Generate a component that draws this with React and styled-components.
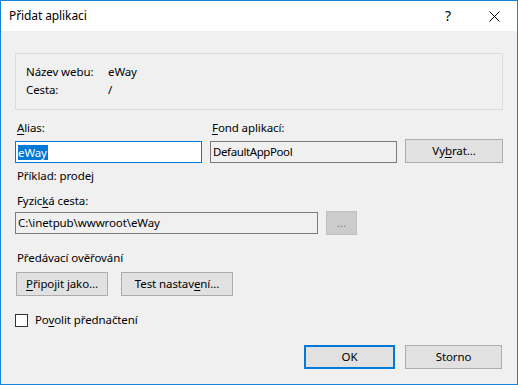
import styled, { createGlobalStyle } from "styled-components";

const GlobalStyle = createGlobalStyle`
  html, body {
    margin: 0;
    padding: 0;
    background: #ffffff;
  }
  * {
    box-sizing: border-box;
  }
`;

function App() {
  return (
    <>
      <GlobalStyle />
      <Window>
        <TitleBar>
          <Title>Přidat aplikaci</Title>
          <CaptionButton>
            <HelpGlyph>?</HelpGlyph>
          </CaptionButton>
          <CaptionButton>
            <svg width="11" height="11" viewBox="0 0 11 11">
              <path d="M0.5 0.5 L10.5 10.5 M10.5 0.5 L0.5 10.5" stroke="#000" strokeWidth="1" fill="none" />
            </svg>
          </CaptionButton>
        </TitleBar>
        <Body>
          <InfoBox>
            <InfoRow>
              <InfoLabel>Název webu:</InfoLabel>
              <span>eWay</span>
            </InfoRow>
            <InfoRow>
              <InfoLabel>Cesta:</InfoLabel>
              <span>/</span>
            </InfoRow>
          </InfoBox>

          <FieldGrid>
            <Label>
              <Key>A</Key>lias:
            </Label>
            <Label>
              <Key>F</Key>ond aplikací:
            </Label>
            <span />
            <TextBox $focused>
              <Selected>eWay</Selected>
            </TextBox>
            <TextBox $readOnly $tight>
              DefaultAppPool
            </TextBox>
            <Button $width={98}>
              Vy<Key>b</Key>rat...
            </Button>
          </FieldGrid>

          <Hint>Příklad: prodej</Hint>

          <Label $top={9}>
            Fyzic<Key>k</Key>á cesta:
          </Label>
          <PathRow>
            <TextBox $readOnly $width={303}>
              C:\inetpub\wwwroot\eWay
            </TextBox>
            <Button $width={31} $disabled>
              ...
            </Button>
          </PathRow>

          <Label $top={15}>Předávací ověřování</Label>
          <ButtonRow>
            <Button $width={92}>
              <Key>P</Key>řipojit jako...
            </Button>
            <Button $width={112}>
              Test nastav<Key>e</Key>ní...
            </Button>
          </ButtonRow>

          <CheckRow>
            <CheckBox />
            <span>
              Po<Key>v</Key>olit přednačtení
            </span>
          </CheckRow>

          <Footer>
            <Button $width={91} $default>
              OK
            </Button>
            <Button $width={97}>Storno</Button>
          </Footer>
        </Body>
      </Window>
    </>
  );
}

export default App;

const Window = styled.div`
  width: 518px;
  height: 385px;
  border: 1px solid #1883d7;
  display: flex;
  flex-direction: column;
  font-family: "Segoe UI", "Noto Sans", sans-serif;
  font-size: 11.5px;
  letter-spacing: -0.1px;
  color: #000;
`;

const TitleBar = styled.div`
  height: 30px;
  background: #ffffff;
  display: flex;
  align-items: center;
`;

const Title = styled.div`
  flex: 1;
  padding-left: 8px;
  font-size: 12px;
  line-height: 16px;
`;

const CaptionButton = styled.div`
  width: 46px;
  height: 30px;
  display: flex;
  align-items: center;
  justify-content: center;
`;

const HelpGlyph = styled.span`
  font-size: 14px;
  line-height: 16px;
`;

const Body = styled.div`
  flex: 1;
  background: #f0f0f0;
  padding: 22px 14px 15px 14px;
  display: flex;
  flex-direction: column;
`;

const InfoBox = styled.div`
  height: 57px;
  border: 1px solid #dcdcdc;
  padding: 9px 10px 10px 10px;
`;

const InfoRow = styled.div`
  display: flex;
  line-height: 18px;
  height: 18px;
`;

const InfoLabel = styled.span`
  width: 82px;
`;

const FieldGrid = styled.div`
  margin-top: 10px;
  display: grid;
  grid-template-columns: 187px 187px 98px;
  column-gap: 8px;
  row-gap: 3px;
  align-items: end;
`;

const Label = styled.div`
  margin-top: ${(p) => p.$top || 0}px;
  padding-left: 2px;
  line-height: 16px;
  height: 16px;
  white-space: nowrap;
`;

const Key = styled.span`
  text-decoration: underline;
  text-underline-offset: 2px;
`;

const TextBox = styled.div`
  width: ${(p) => (p.$width ? `${p.$width}px` : "auto")};
  height: 22px;
  border: 1px solid ${(p) => (p.$focused ? "#0078d7" : "#7a7a7a")};
  background: ${(p) => (p.$readOnly ? "#f0f0f0" : "#ffffff")};
  padding: 0 2px;
  display: flex;
  align-items: center;
  line-height: 16px;
  letter-spacing: ${(p) => (p.$tight ? "-0.4px" : "inherit")};
  white-space: nowrap;
  overflow: hidden;
`;

const Selected = styled.span`
  background: #0078d7;
  color: #ffffff;
  line-height: 15px;
  padding-right: 1px;
`;

const Button = styled.div`
  width: ${(p) => p.$width}px;
  height: 24px;
  border: ${(p) =>
    p.$default
      ? "2px solid #0078d7"
      : p.$disabled
      ? "1px solid #bfbfbf"
      : "1px solid #adadad"};
  background: ${(p) => (p.$disabled ? "#cccccc" : "#e1e1e1")};
  color: ${(p) => (p.$disabled ? "#838383" : "#000")};
  display: flex;
  align-items: center;
  justify-content: center;
  line-height: 16px;
  white-space: nowrap;
`;

const Hint = styled.div`
  margin-top: 5px;
  padding-left: 2px;
  line-height: 16px;
  height: 16px;
`;

const PathRow = styled.div`
  margin-top: 2px;
  display: flex;
  align-items: center;
  gap: 8px;
`;

const ButtonRow = styled.div`
  margin-top: 6px;
  display: flex;
  gap: 13px;
  padding-left: 1px;
`;

const CheckRow = styled.div`
  margin-top: 16px;
  height: 16px;
  display: flex;
  align-items: center;
  gap: 7px;
  line-height: 16px;
`;

const CheckBox = styled.div`
  width: 13px;
  height: 13px;
  border: 1px solid #333333;
  background: #ffffff;
`;

const Footer = styled.div`
  margin-top: 17px;
  display: flex;
  justify-content: flex-end;
  gap: 10px;
  padding-right: 1px;
`;
